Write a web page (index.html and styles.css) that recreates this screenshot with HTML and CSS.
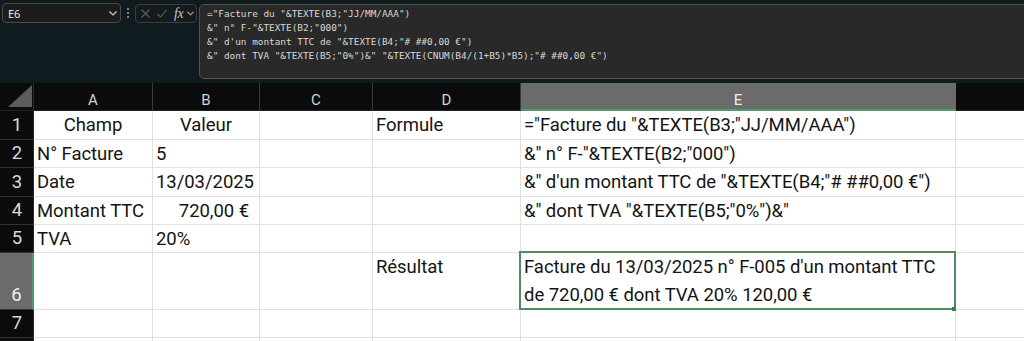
FILE: index.html
```html
<!DOCTYPE html>
<html lang="fr">
<head>
<meta charset="utf-8">
<title>Excel - TEXTE</title>
<link rel="stylesheet" href="styles.css">
</head>
<body>
<div class="toolbar">
  <div class="namebox">
    <span class="ref">E6</span>
    <svg class="chev" width="8" height="5" viewBox="0 0 8 5"><polyline points="0.5,0.5 4,4 7.5,0.5" fill="none" stroke="#d0d0d0" stroke-width="1.2"/></svg>
  </div>
  <div class="grip"><span></span><span></span><span></span></div>
  <div class="fxbox">
    <svg class="ico-x" width="9" height="9" viewBox="0 0 9 9"><path d="M0.5 0.5 L8.5 8.5 M8.5 0.5 L0.5 8.5" stroke="#5e5e5e" stroke-width="1.1" fill="none"/></svg>
    <svg class="ico-ok" width="10" height="9" viewBox="0 0 10 9"><polyline points="0.5,5 3.5,8 9.5,0.8" stroke="#5e5e5e" stroke-width="1.1" fill="none"/></svg>
    <span class="fx">fx</span>
    <svg class="chev-s" width="7" height="5" viewBox="0 0 7 5"><polyline points="0.5,0.8 3.5,3.8 6.5,0.8" fill="none" stroke="#b0b0b0" stroke-width="1.1"/></svg>
  </div>
  <div class="formula">
    <div class="fline">="Facture du "&amp;TEXTE(B3;"JJ/MM/AAA")</div>
    <div class="fline">&amp;" n° F-"&amp;TEXTE(B2;"000")</div>
    <div class="fline">&amp;" d'un montant TTC de "&amp;TEXTE(B4;"# ##0,00 €")</div>
    <div class="fline">&amp;" dont TVA "&amp;TEXTE(B5;"0%")&amp;" "&amp;TEXTE(CNUM(B4/(1+B5)*B5);"# ##0,00 €")</div>
  </div>
</div>

<div class="sheet">
  <div class="corner"><svg width="24" height="22" viewBox="0 0 24 22"><polygon points="24,0 24,22 0,22" fill="#5c5c5c"/></svg></div>
  <div class="ch">A</div>
  <div class="ch">B</div>
  <div class="ch">C</div>
  <div class="ch">D</div>
  <div class="ch sel">E</div>
  <div class="ch last">F</div>

  <div class="rh">1</div>
  <div class="c center">Champ</div>
  <div class="c center">Valeur</div>
  <div class="c"></div>
  <div class="c">Formule</div>
  <div class="c">="Facture du "&amp;TEXTE(B3;"JJ/MM/AAA")</div>
  <div class="c"></div>

  <div class="rh">2</div>
  <div class="c">N° Facture</div>
  <div class="c">5</div>
  <div class="c"></div>
  <div class="c"></div>
  <div class="c">&amp;" n° F-"&amp;TEXTE(B2;"000")</div>
  <div class="c"></div>

  <div class="rh">3</div>
  <div class="c">Date</div>
  <div class="c">13/03/2025</div>
  <div class="c"></div>
  <div class="c"></div>
  <div class="c">&amp;" d'un montant TTC de "&amp;TEXTE(B4;"# ##0,00 €")</div>
  <div class="c"></div>

  <div class="rh">4</div>
  <div class="c">Montant TTC</div>
  <div class="c num">720,00 €</div>
  <div class="c"></div>
  <div class="c"></div>
  <div class="c">&amp;" dont TVA "&amp;TEXTE(B5;"0%")&amp;"</div>
  <div class="c"></div>

  <div class="rh">5</div>
  <div class="c">TVA</div>
  <div class="c">20%</div>
  <div class="c"></div>
  <div class="c"></div>
  <div class="c"></div>
  <div class="c"></div>

  <div class="rh sel">6</div>
  <div class="c"></div>
  <div class="c"></div>
  <div class="c"></div>
  <div class="c">Résultat</div>
  <div class="c active wrap">Facture du 13/03/2025 n° F-005 d'un montant TTC<br>de 720,00 € dont TVA 20% 120,00 €</div>
  <div class="c"></div>

  <div class="rh">7</div>
  <div class="c"></div>
  <div class="c"></div>
  <div class="c"></div>
  <div class="c"></div>
  <div class="c"></div>
  <div class="c"></div>

  <div class="rh">8</div>
  <div class="c"></div>
  <div class="c"></div>
  <div class="c"></div>
  <div class="c"></div>
  <div class="c"></div>
  <div class="c"></div>
</div>
</body>
</html>
```

FILE: styles.css
```css
* { box-sizing: border-box; }

html, body {
  margin: 0;
  padding: 0;
}

body {
  width: 1024px;
  height: 341px;
  overflow: hidden;
  background: #0b0b0b;
  font-family: Roboto, "Liberation Sans", sans-serif;
}

/* ---------- formula toolbar ---------- */
.toolbar {
  height: 83px;
  background: #0f1b1f;
  display: flex;
  align-items: flex-start;
  padding: 3px 0 0 2px;
  overflow: hidden;
}

.namebox {
  width: 119px;
  height: 20px;
  flex: none;
  border: 1px solid #4a4a4a;
  border-radius: 4px;
  background: #1c1c1c;
  display: flex;
  align-items: center;
  justify-content: space-between;
  padding: 0 3px 0 5px;
  font-family: "Noto Sans", "Liberation Sans", sans-serif;
  font-size: 11px;
  color: #e8e8e8;
}

.grip {
  width: 14px;
  height: 20px;
  flex: none;
  display: flex;
  flex-direction: column;
  align-items: center;
  justify-content: center;
  gap: 2px;
}

.grip span {
  width: 2px;
  height: 2px;
  background: #a0a0a0;
  border-radius: 1px;
}

.fxbox {
  margin-top: 1px;
  width: 62px;
  height: 19px;
  flex: none;
  border: 1px solid #3c3c3c;
  border-radius: 4px;
  background: #151a1c;
  display: flex;
  align-items: center;
  padding-left: 5px;
}

.ico-ok { margin-left: 7px; }

.fx {
  margin-left: 7px;
  font-family: "Liberation Serif", "DejaVu Serif", serif;
  font-style: italic;
  font-size: 14px;
  line-height: 14px;
  color: #c0c0c0;
  letter-spacing: -0.5px;
}

.chev-s { margin-left: 4px; }

.formula {
  margin: 1px -12px 0 2px;
  flex: 1;
  height: 75px;
  border: 1px solid #525252;
  border-radius: 5px;
  background: #292929;
  padding: 2px 7px;
  font-family: "DejaVu Sans Mono", "Liberation Mono", monospace;
  font-size: 9.4px;
  line-height: 14px;
  color: #d8d8d8;
}

.fline {
  white-space: pre;
  height: 14px;
}

/* ---------- sheet grid ---------- */
.sheet {
  display: grid;
  grid-template-columns: 34px 119px 107px 113px 148px 435px 146px;
  grid-template-rows: 28px 29px 28px 29px 28px 28px 57px 28px 28px;
}

.corner {
  background: #0b0b0b;
  border-right: 1px solid #2a2a2a;
  border-bottom: 1px solid #222;
  display: flex;
  align-items: flex-end;
  justify-content: flex-end;
  padding: 0 1px 3px 0;
}

.ch {
  background: #0b0b0b;
  border-right: 1px solid #3a3a3a;
  border-bottom: 1px solid #222;
  color: #d2d2d2;
  font-size: 15px;
  line-height: 22px;
  padding-top: 6px;
  text-align: center;
}

.ch.sel {
  background: #6b6b6b;
  color: #f0f0f0;
  border-bottom: 2px solid #4e9a68;
  border-right-color: #6b6b6b;
}

.rh {
  background: #0b0b0b;
  border-right: 1px solid #2a2a2a;
  border-bottom: 1px solid #333;
  color: #d8d8d8;
  font-size: 18.5px;
  line-height: 28px;
  display: flex;
  align-items: flex-end;
  justify-content: center;
  padding-left: 1px;
}

.rh.sel {
  background: #6b6b6b;
  color: #f2f2f2;
  border-right: 2px solid #4e9a68;
}

.c {
  background: #ffffff;
  border-right: 1px solid #e1e1e1;
  border-bottom: 1px solid #e1e1e1;
  color: #141414;
  font-size: 18.5px;
  letter-spacing: -0.05px;
  line-height: 28px;
  padding: 0 3px;
  white-space: nowrap;
  overflow: hidden;
}

.c.center { text-align: center; }

.c.num {
  text-align: right;
  padding-right: 10px;
}

.c.wrap { white-space: normal; }

.c.active {
  position: relative;
  overflow: visible;
}

.c.active::after {
  content: "";
  position: absolute;
  top: -2px;
  left: -2px;
  right: -1px;
  bottom: -1px;
  border: 2px solid #4e8d62;
  pointer-events: none;
}

.c.active::before {
  content: "";
  position: absolute;
  right: -1px;
  bottom: -2px;
  width: 4px;
  height: 4px;
  background: #3e7d52;
  z-index: 1;
}
```
